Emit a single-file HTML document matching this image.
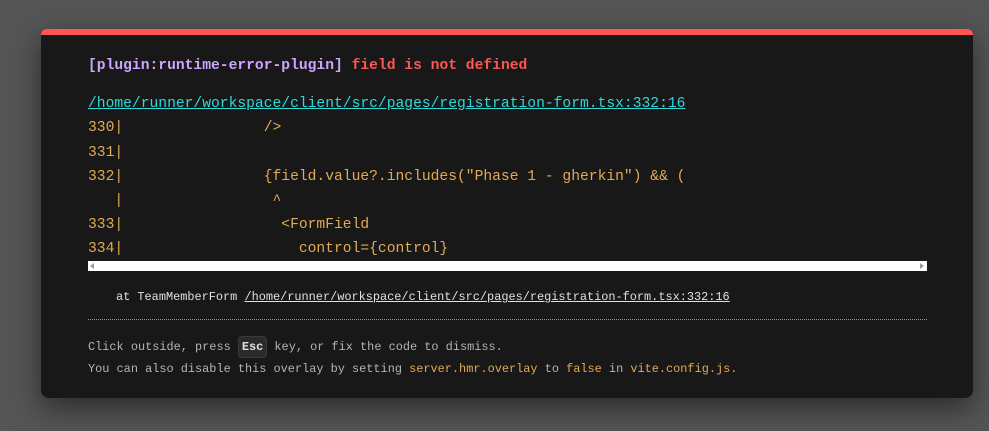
<!DOCTYPE html>
<html><head><meta charset="utf-8"><style>
html,body{margin:0;padding:0;width:989px;height:431px;overflow:hidden;background:#555555;}
.panel{position:absolute;left:41px;top:29px;width:932px;height:369px;background:#181818;border-top:6px solid #ff5555;box-sizing:border-box;border-radius:6px 6px 8px 8px;box-shadow:0 10px 30px rgba(0,0,0,.5);}
.t{position:absolute;left:88px;font-family:"Liberation Mono",monospace;white-space:pre;margin:0;}
.big{font-size:14.65px;line-height:18px;}
.sm{font-size:11.9px;line-height:16px;}
.y{color:#e2aa53}
.r{color:#ff5555;font-weight:bold}
.p{color:#cfa4ff;font-weight:bold}
.c{color:#2dd9da;text-decoration:underline}
.g{color:#b4b4b4}
.w{color:#e0e0e0}
.kbd{display:inline-block;background:#2b2b2b;border:1px solid #3a3a3a;border-radius:4px;padding:1px 3px;color:#e0e0e0;font-weight:bold;line-height:18px}
</style></head><body>
<div class="panel"></div>
<div class="t big" style="top:57px"><span class="p">[plugin:runtime-error-plugin]</span> <span class="r">field is not defined</span></div>
<div class="t big c" style="top:95px">/home/runner/workspace/client/src/pages/registration-form.tsx:332:16</div>
<div class="t big y" style="top:119px">330|                /&gt;</div>
<div class="t big y" style="top:144px">331|</div>
<div class="t big y" style="top:168px">332|                {field.value?.includes("Phase 1 - gherkin") &amp;&amp; (</div>
<div class="t big y" style="top:192px">   |                 ^</div>
<div class="t big y" style="top:216px">333|                  &lt;FormField</div>
<div class="t big y" style="top:240px">334|                    control={control}</div>
<div style="position:absolute;left:88px;top:261px;width:839px;height:10px;background:#fff"></div>
<div style="position:absolute;left:90px;top:263px;width:0;height:0;border-top:3px solid transparent;border-bottom:3px solid transparent;border-right:4px solid #999"></div>
<div style="position:absolute;left:920px;top:263px;width:0;height:0;border-top:3px solid transparent;border-bottom:3px solid transparent;border-left:4px solid #999"></div>
<div class="t sm w" style="top:289px;left:116px">at TeamMemberForm <span style="text-decoration:underline">/home/runner/workspace/client/src/pages/registration-form.tsx:332:16</span></div>
<div style="position:absolute;left:88px;top:319px;width:839px;border-top:1px dotted #999"></div>
<div class="t sm g" style="top:336px">Click outside, press <span class="kbd">Esc</span> key, or fix the code to dismiss.</div>
<div class="t sm g" style="top:361px">You can also disable this overlay by setting <span class="y">server.hmr.overlay</span> to <span class="y">false</span> in <span class="y">vite.config.js.</span></div>
</body></html>
